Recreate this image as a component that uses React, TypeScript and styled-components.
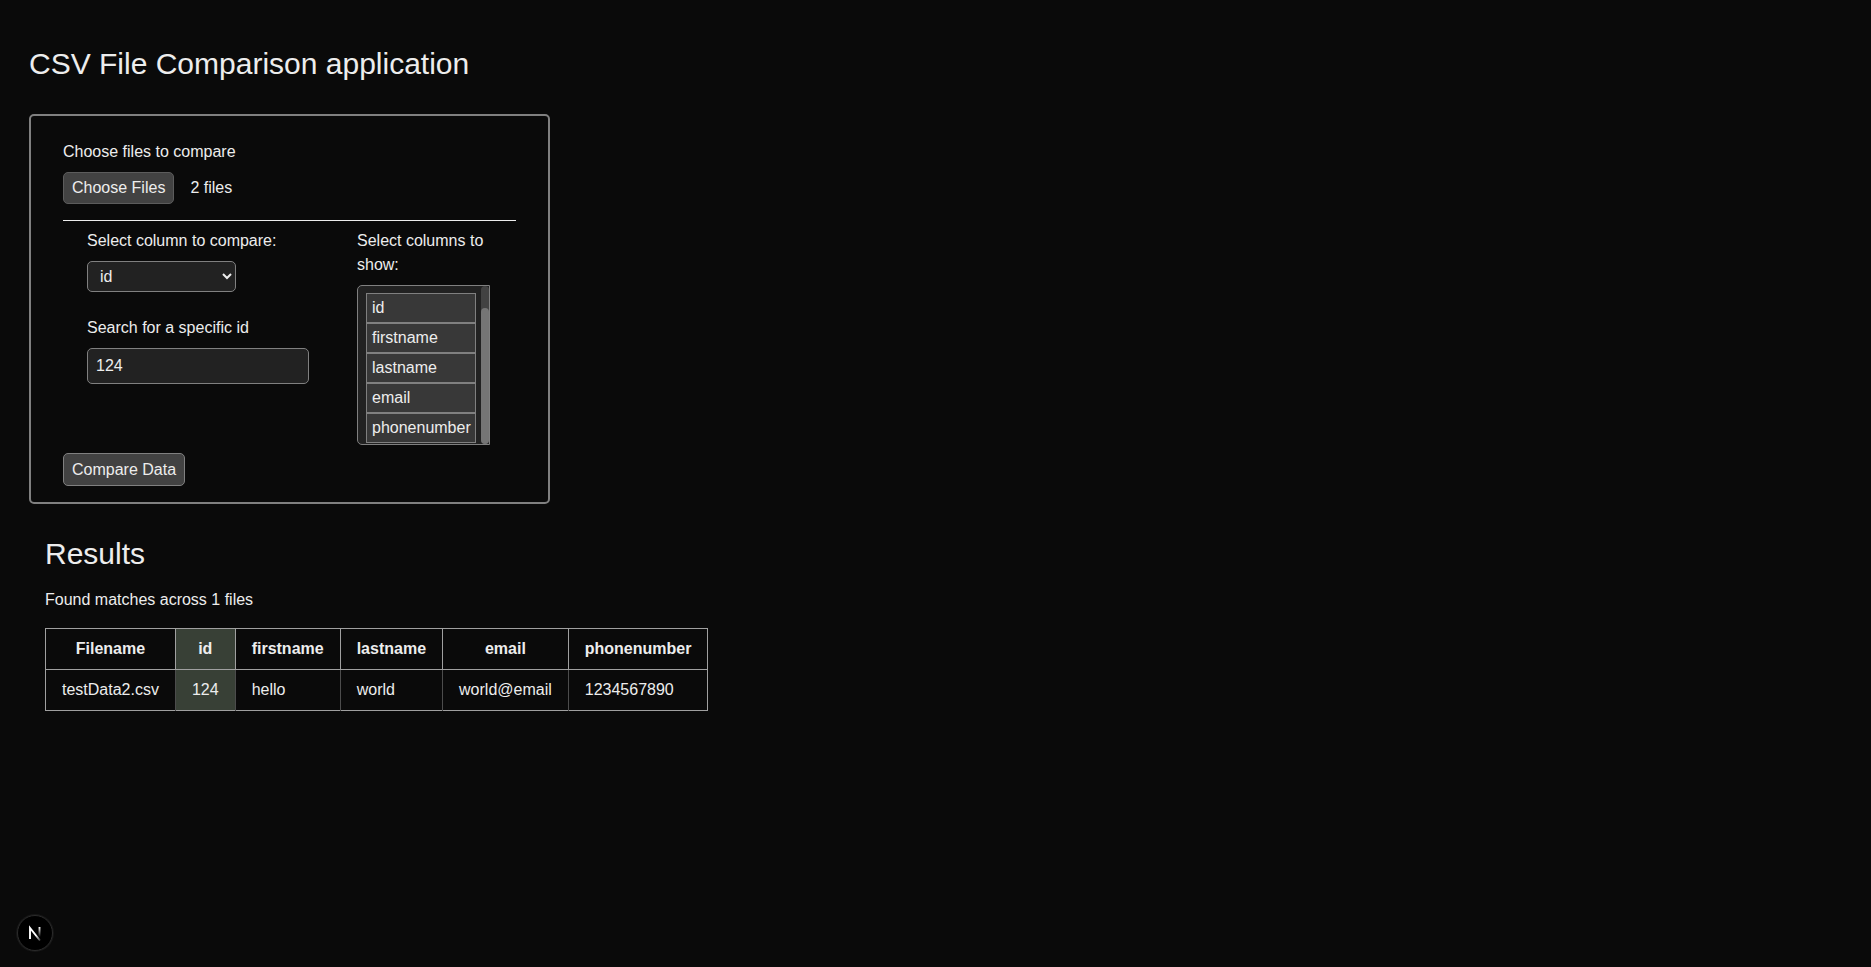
import React, { useState } from "react";
import styled, { createGlobalStyle } from "styled-components";

const GlobalStyle = createGlobalStyle`
  *, *::before, *::after { box-sizing: border-box; margin: 0; }
  body {
    margin: 0;
    background: #0a0a0a;
    color: #ededed;
    font: 16px/24px Arial, "Liberation Sans", sans-serif;
  }
  button, input, select { font: inherit; color: inherit; }
`;

const Page = styled.main`
  min-height: 100vh;
  padding: 28px 29px;
`;

const Title = styled.h1`
  padding: 18px 0 32px;
  font-size: 30px;
  line-height: 36px;
  font-weight: 400;
`;

const Card = styled.form`
  width: fit-content;
  padding: 24px 32px 16px;
  border: 2px solid #808080;
  border-radius: 5px;
`;

const FileRow = styled.div`
  display: flex;
  align-items: center;
  gap: 16px;
  padding: 8px 0 16px;
`;

const Button = styled.button`
  height: 32px;
  padding: 0 8px;
  border: 1px solid #5c5c5c;
  border-radius: 5px;
  background: #424242;
`;

const SubmitButton = styled(Button)`
  height: 33px;
  border-color: #808080;
`;

const Columns = styled.div`
  display: flex;
  gap: 48px;
  padding: 8px 24px;
  border-top: 1px solid #ededed;
`;

const Fields = styled.div`
  display: flex;
  flex-direction: column;
  gap: 24px;
  width: 222px;
`;

const Field = styled.div<{ $width?: number }>`
  display: flex;
  flex-direction: column;
  align-items: flex-start;
  gap: 8px;
  width: ${(p) => (p.$width ? `${p.$width}px` : "auto")};
`;

const Select = styled.select`
  width: 149px;
  height: 31px;
  padding: 0 0 0 8px;
  border: 1px solid #808080;
  border-radius: 5px;
  background: #222;
`;

const TextInput = styled.input`
  width: 100%;
  height: 36px;
  padding: 0 8px;
  border: 1px solid #808080;
  border-radius: 5px;
  background: #222;
`;

const ListFrame = styled.div`
  position: relative;
  display: flex;
  width: 133px;
`;

const ListBox = styled.select`
  width: 100%;
  height: 160px;
  padding: 7px 13px 1px 8px;
  border: 1px solid #808080;
  border-radius: 5px 0 0 5px;
  background: #222;
  overflow-y: hidden;
  outline: none;

  option {
    width: 110px;
    height: 30px;
    padding: 5px 5px 4px;
    border: 1px solid #808080;
    background: #383838;
    color: #ededed;
  }
`;

const ScrollTrack = styled.div`
  position: absolute;
  top: 1px;
  right: 1px;
  bottom: 1px;
  display: flex;
  align-items: flex-end;
  width: 8px;
  border-radius: 4px;
  background: #424242;
`;

const ScrollThumb = styled.div`
  width: 100%;
  height: 86%;
  border-radius: 4px;
  background: #757575;
`;

const Results = styled.section`
  padding: 32px 16px;
`;

const ResultsTitle = styled.h2`
  padding-bottom: 16px;
  font-size: 30px;
  line-height: 36px;
  font-weight: 400;
`;

const Table = styled.table`
  margin-top: 16px;
  border-collapse: collapse;
  tr { border: 1px solid #a0a0a0; }
`;

const HeadCell = styled.th<{ $active: boolean }>`
  padding: 8px 16px;
  border: 1px solid #a0a0a0;
  background: ${(p) => (p.$active ? "#384036" : "transparent")};
`;

const Cell = styled.td<{ $active: boolean }>`
  padding: 8px 16px;
  border-right: 1px solid #4c4c4c;
  background: ${(p) => (p.$active ? "#384036" : "transparent")};
  &:last-child { border-right: 0; }
`;

const DevBadge = styled.button`
  position: fixed;
  left: 17px;
  bottom: 16px;
  display: grid;
  place-items: center;
  width: 36px;
  height: 36px;
  padding: 0;
  border: 1px solid #2b2b2b;
  border-radius: 50%;
  background: #000;
  box-shadow: 0 0 0 1px #171717;
`;

const columns = ["id", "firstname", "lastname", "email", "phonenumber"];
const heads = ["Filename", ...columns];
const rows = [["testData2.csv", "124", "hello", "world", "world@email", "1234567890"]];

export default function App() {
  const [column, setColumn] = useState("id");
  const [query, setQuery] = useState("124");

  return (
    <>
      <GlobalStyle />
      <Page>
        <Title>CSV File Comparison application</Title>
        <Card onSubmit={(e) => e.preventDefault()}>
          <label htmlFor="files">Choose files to compare</label>
          <FileRow>
            <Button id="files" type="button">Choose Files</Button>
            <span>2 files</span>
          </FileRow>
          <Columns>
            <Fields>
              <Field>
                <label htmlFor="column">Select column to compare:</label>
                <Select id="column" value={column} onChange={(e) => setColumn(e.target.value)}>
                  {columns.map((c) => <option key={c}>{c}</option>)}
                </Select>
              </Field>
              <Field>
                <label htmlFor="query">Search for a specific {column}</label>
                <TextInput id="query" value={query} onChange={(e) => setQuery(e.target.value)} />
              </Field>
            </Fields>
            <Field $width={135}>
              <label htmlFor="shown">Select columns to show:</label>
              <ListFrame>
                <ListBox id="shown" multiple>
                  {columns.map((c) => <option key={c}>{c}</option>)}
                </ListBox>
                <ScrollTrack aria-hidden="true"><ScrollThumb /></ScrollTrack>
              </ListFrame>
            </Field>
          </Columns>
          <SubmitButton type="submit">Compare Data</SubmitButton>
        </Card>
        <Results>
          <ResultsTitle>Results</ResultsTitle>
          <p>Found matches across 1 files</p>
          <Table>
            <thead>
              <tr>{heads.map((h) => <HeadCell key={h} $active={h === column}>{h}</HeadCell>)}</tr>
            </thead>
            <tbody>
              {rows.map((row) => (
                <tr key={row[0]}>
                  {row.map((v, i) => <Cell key={heads[i]} $active={heads[i] === column}>{v}</Cell>)}
                </tr>
              ))}
            </tbody>
          </Table>
        </Results>
      </Page>
      <DevBadge type="button" aria-label="Open developer tools">
        <svg width="14" height="16" viewBox="0 0 14 16" fill="none">
          <defs>
            <linearGradient id="stem" x1="0" y1="2" x2="0" y2="12" gradientUnits="userSpaceOnUse">
              <stop stopColor="#fff" /><stop offset="1" stopColor="#fff" stopOpacity="0" />
            </linearGradient>
            <linearGradient id="slash" x1="8" y1="10" x2="13" y2="15" gradientUnits="userSpaceOnUse">
              <stop stopColor="#fff" /><stop offset="1" stopColor="#fff" stopOpacity="0.2" />
            </linearGradient>
          </defs>
          <path d="M2 14V3L12 15.500" stroke="url(#slash)" strokeWidth="1.900" />
          <path d="M11.500 2V12" stroke="url(#stem)" strokeWidth="1.900" />
        </svg>
      </DevBadge>
    </>
  );
}
